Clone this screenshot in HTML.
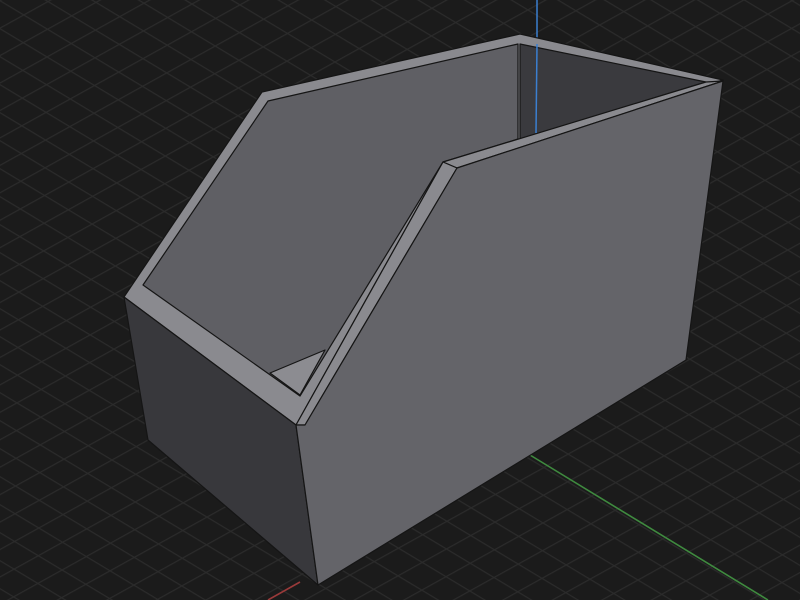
<!DOCTYPE html>
<html><head><style>html,body{margin:0;padding:0;background:#1b1b1b;}svg{display:block}</style></head>
<body>
<svg width="800" height="600" viewBox="0 0 800 600" xmlns="http://www.w3.org/2000/svg">
<defs>
<pattern id="g1" width="24" height="24" patternUnits="userSpaceOnUse" patternTransform="rotate(31)">
<rect x="0" y="0" width="24" height="1.2" fill="#2b2b2b"/></pattern>
<pattern id="g2" width="24" height="24" patternUnits="userSpaceOnUse" patternTransform="rotate(-29)">
<rect x="0" y="0" width="24" height="1.2" fill="#2b2b2b"/></pattern>
</defs>
<rect width="800" height="600" fill="#1b1b1b"/>
<rect width="800" height="600" fill="url(#g1)"/>
<rect width="800" height="600" fill="url(#g2)"/>
<line x1="530" y1="455" x2="768" y2="600" stroke="#3f8a3f" stroke-width="1.6"/>
<line x1="268" y1="600" x2="300" y2="582" stroke="#9a3a3a" stroke-width="1.6"/>
<line x1="537" y1="0" x2="537" y2="40" stroke="#3b7fd0" stroke-width="1.5"/>
<g stroke="#151515" stroke-width="1.2" stroke-linejoin="round">
<polygon points="124,297 262,92 520,34 723,80 443,162 296,425" fill="#8a8a8f"/>
<polygon points="520,44 706,82 520,139" fill="#3a3a3e"/>
<polygon points="143,285 268,101 518,44 518,139 443,162 300,396" fill="#5f5f64"/>
<polygon points="270,373 325,350 300,395" fill="#8c8c91"/>
<polygon points="124,297 296,425 318,585 148,440" fill="#38383c"/>
<polygon points="443,162 706,82 723,81 457,168" fill="#8a8a8f"/>
<polygon points="443,162 457,168 305,425 296,425" fill="#8a8a8f"/>
<polygon points="457,168 723,81 686,360 318,585 296,425 305,425" fill="#646469"/>
</g>
<line x1="537" y1="44" x2="536" y2="133" stroke="#3b7fd0" stroke-width="1.5"/>
</svg>
</body></html>
